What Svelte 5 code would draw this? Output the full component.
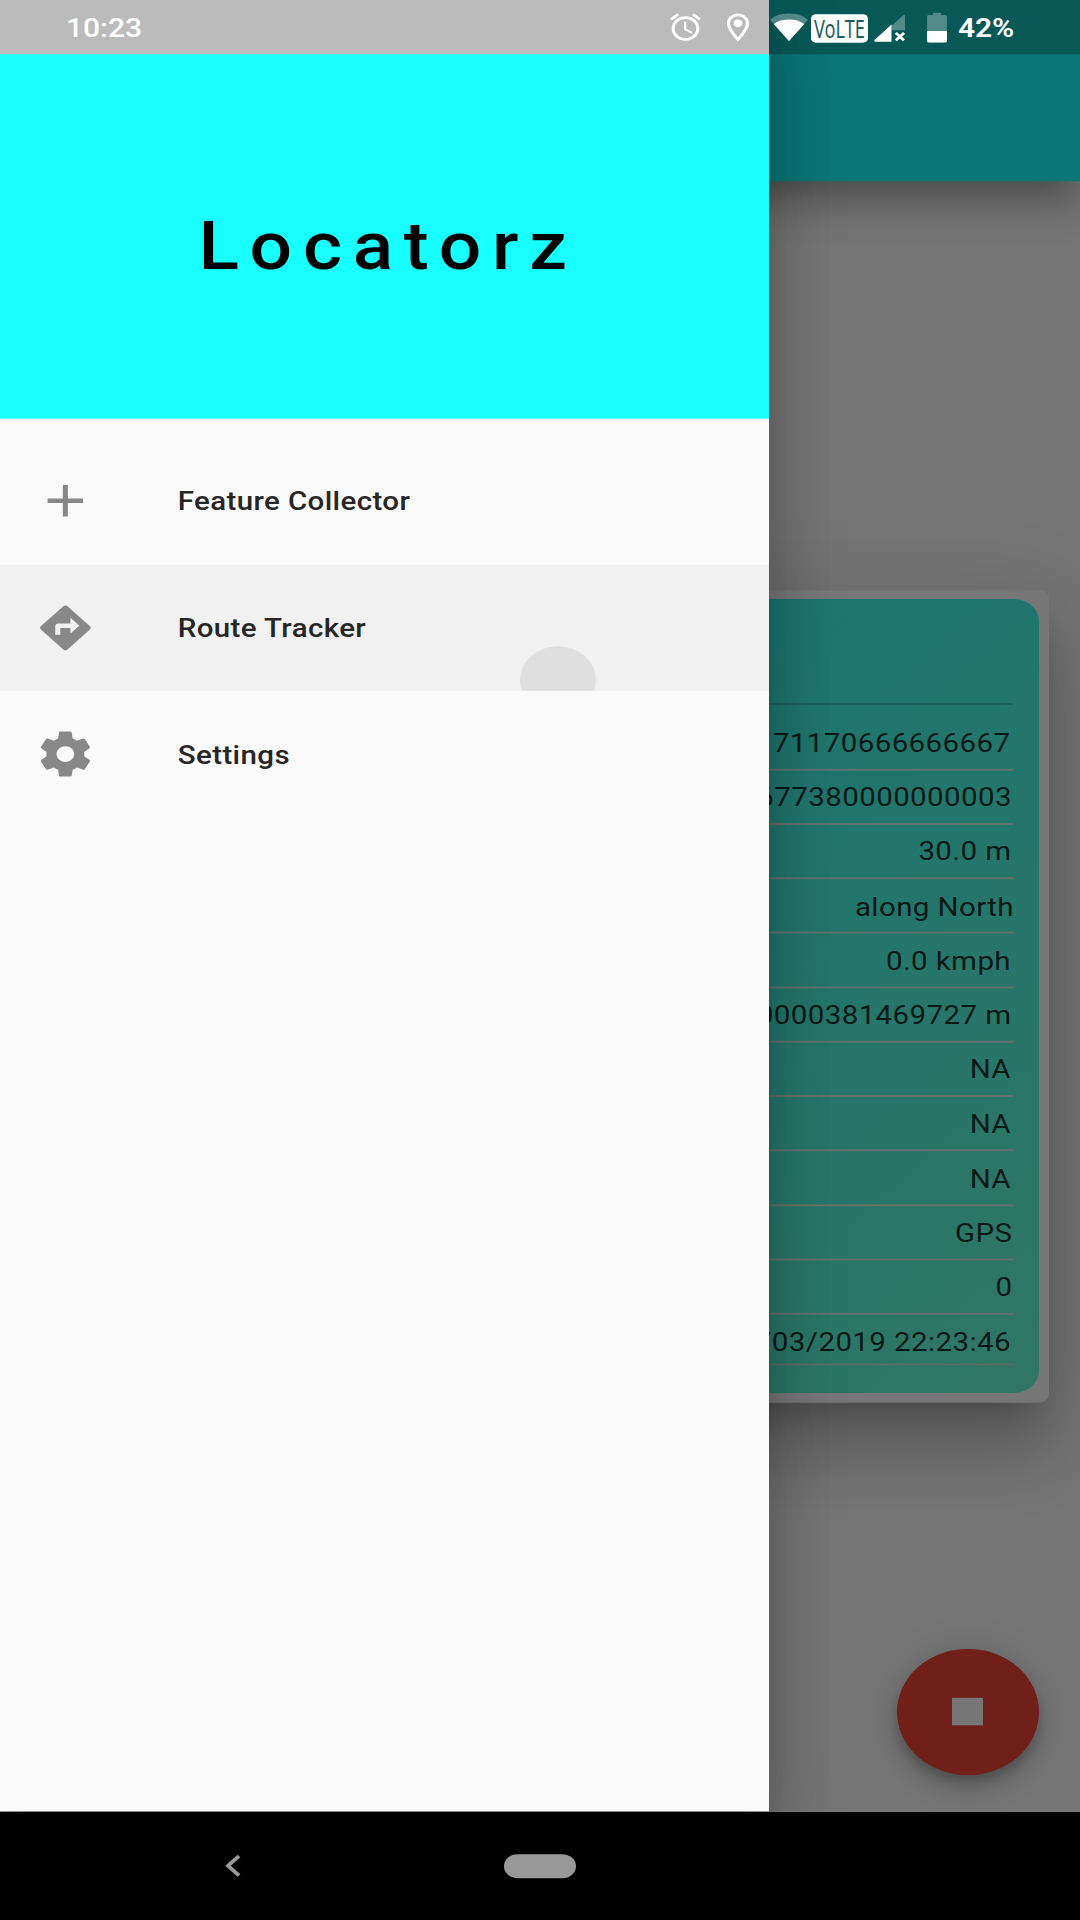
<script>
  // `inset` is the gap between a value and the right end of its divider.
  const readings = [
    { value: '71170666666667', inset: 2.5 },
    { value: '677380000000003', inset: 1 },
    { value: '30.0 m', inset: 1.5 },
    { value: 'along North', inset: -1 },
    { value: '0.0 kmph', inset: 2 },
    { value: '0000381469727 m', inset: 1.5 },
    { value: 'NA', inset: 2 },
    { value: 'NA', inset: 2 },
    { value: 'NA', inset: 2 },
    { value: 'GPS', inset: 0.5 },
    { value: '0', inset: 0.5 },
    { value: '/03/2019 22:23:46', inset: 2 }
  ];

  const menu = [
    { label: 'Feature Collector', icon: 'M19 13h-6v6h-2v-6H5v-2h6V5h2v6h6v2z' },
    {
      label: 'Route Tracker',
      active: true,
      icon: 'M21.71 11.29l-9-9c-.39-.39-1.02-.39-1.41 0l-9 9c-.39.39-.39 1.02 0 1.41l9 9c.39.39 1.02.39 1.41 0l9-9c.39-.38.39-1.01 0-1.41zM14 14.5V12h-4v3H8v-4c0-.55.45-1 1-1h5V7.5l3.5 3.5-3.5 3.5z'
    },
    {
      label: 'Settings',
      icon: 'M19.43 12.98c.04-.32.07-.64.07-.98s-.03-.66-.07-.98l2.11-1.65c.19-.15.24-.42.12-.64l-2-3.46c-.12-.22-.39-.3-.61-.22l-2.49 1c-.52-.4-1.08-.73-1.69-.98l-.38-2.65C14.46 2.18 14.25 2 14 2h-4c-.25 0-.46.18-.49.42l-.38 2.65c-.61.25-1.17.59-1.69.98l-2.49-1c-.23-.09-.49 0-.61.22l-2 3.46c-.13.22-.07.49.12.64l2.11 1.65c-.04.32-.07.65-.07.98s.03.66.07.98l-2.11 1.65c-.19.15-.24.42-.12.64l2 3.46c.12.22.39.3.61.22l2.49-1c.52.4 1.08.73 1.69.98l.38 2.65c.03.24.24.42.49.42h4c.25 0 .46-.18.49-.42l.38-2.65c.61-.25 1.17-.59 1.69-.98l2.49 1c.23.09.49 0 .61-.22l2-3.46c.12-.22.07-.49-.12-.64l-2.11-1.65zM12 15.5c-1.93 0-3.5-1.57-3.5-3.5s1.57-3.5 3.5-3.5 3.5 1.57 3.5 3.5-1.57 3.5-3.5 3.5z'
    }
  ];
</script>

<div class="viewport">
  <div class="screen">
    <div class="app">
      <main class="page">
        <header class="appbar"></header>
        <section class="card">
          <div class="panel">
            <div class="panel-head"></div>
            <ul class="readings">
              {#each readings as r}
                <li><span style:margin-right="{r.inset}px">{r.value}</span></li>
              {/each}
            </ul>
          </div>
        </section>
        <button class="fab" aria-label="Stop"><i></i></button>
      </main>

      <div class="scrim"></div>

      <aside class="drawer">
        <div class="drawer-head"><h1>Locatorz</h1></div>
        <nav>
          {#each menu as item}
            <a class:active={item.active}>
              <svg viewBox="0 0 24 24"><path d={item.icon} /></svg>
              <span>{item.label}</span>
              {#if item.active}<b class="ripple"></b>{/if}
            </a>
          {/each}
        </nav>
      </aside>

      <div class="status">
        <span class="time">10:23</span>
        <svg class="alarm" viewBox="0 0 24 24">
          <path d="M22 5.72l-4.6-3.86-1.29 1.53 4.6 3.86L22 5.72zM7.88 3.39L6.6 1.86 2 5.71l1.29 1.53 4.59-3.85zM12.5 8H11v6l4.75 2.85.75-1.23-4-2.37V8zM12 4c-4.97 0-9 4.03-9 9s4.02 9 9 9c4.97 0 9-4.03 9-9s-4.03-9-9-9zm0 16c-3.87 0-7-3.13-7-7s3.13-7 7-7 7 3.13 7 7-3.13 7-7 7z" />
        </svg>
        <svg class="pin" viewBox="0 0 24 24">
          <path d="M12 2C8.13 2 5 5.13 5 9c0 5.25 7 13 7 13s7-7.75 7-13c0-3.87-3.13-7-7-7zM7 9c0-2.76 2.24-5 5-5s5 2.24 5 5c0 2.88-2.88 7.19-5 9.88C9.92 16.21 7 11.85 7 9z" />
          <circle cx="12" cy="9" r="2.7" />
        </svg>
        <svg class="wifi" viewBox="0 0 38 31">
          <path opacity=".3" d="M19 31 0 7.200Q8 0 19 0T38 7.200Z" />
          <path d="M19 31 3.700 12Q10 7 19 7T34.300 12Z" />
        </svg>
        <svg class="volte" viewBox="0 0 57 32">
          <rect width="57" height="32" rx="5" />
          <text x="3" y="26.500" textLength="51" lengthAdjust="spacingAndGlyphs">VoLTE</text>
        </svg>
        <svg class="signal" viewBox="0 0 31 32">
          <path opacity=".3" d="M17.500 13.200 29.500 .8Q31 0 31 1.500V18H17.500Z" />
          <path d="M17.500 11.500V31H1.500Q-.5 31 .8 28.800Z" />
          <path class="cross" d="M21.800 21 30 29.500M30 21 21.800 29.500" />
        </svg>
        <svg class="battery" viewBox="0 0 20 34">
          <path opacity=".3" d="M0 5Q0 3 2 3H6V0H14V3H18Q20 3 20 5V21H0Z" />
          <path d="M0 21H20V32Q20 34 18 34H2Q0 34 0 32Z" />
        </svg>
        <span class="level">42%</span>
      </div>
    </div>

    <footer class="navbar">
      <svg class="back" viewBox="0 0 16 26"><path d="M14 2 3 13 14 24" /></svg>
      <span class="home"></span>
    </footer>
  </div>
</div>

<style>
  .viewport {
    width: 1080px;
    height: 1920px;
    overflow: hidden;
    background: #000;
  }
  /* The phone screen is 1080x2160, compressed vertically to fit the viewport. */
  .screen {
    display: flex;
    flex-direction: column;
    width: 1080px;
    height: 2160px;
    transform: scaleY(0.888889);
    transform-origin: 0 0;
    font-family: Roboto, sans-serif;
    color: #262626;
  }
  .app {
    position: relative;
    flex: 1;
    overflow: hidden;
    background: #fcfcfc;
  }
  .page {
    display: flex;
    flex-direction: column;
    height: 100%;
  }
  .appbar {
    height: 204px;
    background: #18ffff;
    box-shadow: 0 22px 28px -14px rgba(0, 0, 0, 0.2), 0 32px 36px 2px rgba(0, 0, 0, 0.12),
      0 12px 50px 6px rgba(0, 0, 0, 0.1);
  }
  .card {
    box-sizing: border-box;
    height: 914px;
    margin: 460px 31px 0;
    padding: 10px;
    border-radius: 10px;
    background: #fff;
    box-shadow: 0 28px 32px -16px rgba(0, 0, 0, 0.2), 0 58px 70px 6px rgba(0, 0, 0, 0.14),
      0 20px 90px 15px rgba(0, 0, 0, 0.12);
  }
  .panel {
    box-sizing: border-box;
    height: 893px;
    padding: 0 26px;
    border-radius: 25px;
    background: linear-gradient(135deg, #20ffff, #69ffd8);
  }
  .panel-head {
    box-sizing: border-box;
    height: 119px;
    border-bottom: 2px solid rgba(0, 0, 0, 0.14);
  }
  .readings {
    margin: 0;
    padding: 12.400px 0 0;
    list-style: none;
  }
  li {
    box-sizing: border-box;
    display: flex;
    justify-content: flex-end;
    height: 61.250px;
    padding-top: 13.500px;
    border-bottom: 2px solid #e3efea;
    font-size: 29.500px;
    line-height: 35px;
    letter-spacing: 0.4px;
    white-space: nowrap;
    color: rgba(0, 0, 0, 0.8);
  }
  li:last-child {
    height: 56.500px;
    border-color: #c8e8da;
  }
  .fab {
    position: absolute;
    right: 41.500px;
    bottom: 41.500px;
    display: grid;
    place-items: center;
    width: 142px;
    height: 142px;
    padding: 0;
    border: 0;
    border-radius: 50%;
    background: #f44336;
    box-shadow: 0 8px 12px -2px rgba(0, 0, 0, 0.2), 0 15px 25px 0 rgba(0, 0, 0, 0.14),
      0 3px 45px 0 rgba(0, 0, 0, 0.12);
  }
  .fab i {
    width: 31.500px;
    height: 31.500px;
    background: #fff;
  }
  .scrim {
    position: absolute;
    inset: 0;
    background: rgba(0, 0, 0, 0.536);
  }
  .drawer {
    position: absolute;
    top: 0;
    bottom: 0;
    left: 0;
    box-sizing: border-box;
    width: 769px;
    padding-top: 61px;
    background: #fafafa;
    box-shadow: 0 20px 25px -12px rgba(0, 0, 0, 0.2), 0 40px 60px 5px rgba(0, 0, 0, 0.14),
      0 15px 75px 12px rgba(0, 0, 0, 0.12);
  }
  .drawer-head {
    display: flex;
    justify-content: center;
    height: 410px;
    background: #18ffff;
  }
  h1 {
    margin: 172px 0 0 7px;
    font-size: 75px;
    line-height: 88px;
    font-weight: 500;
    letter-spacing: 10.700px;
    color: #000;
  }
  nav {
    padding-top: 21px;
  }
  nav a {
    position: relative;
    display: flex;
    align-items: center;
    gap: 82px;
    box-sizing: border-box;
    height: 142.600px;
    padding-left: 35px;
    overflow: hidden;
    font-size: 29.500px;
    font-weight: 500;
    letter-spacing: 0.38px;
  }
  nav span {
    padding-top: 2px;
  }
  nav a.active {
    background: #f1f1f1;
  }
  nav svg {
    width: 60.750px;
    height: 60.750px;
    fill: #888;
  }
  .ripple {
    position: absolute;
    left: 519.500px;
    top: 92.500px;
    width: 76px;
    height: 76px;
    border-radius: 50%;
    background: #dfdfdf;
  }
  .status {
    position: absolute;
    inset: 0 0 auto;
    display: flex;
    align-items: flex-start;
    height: 61px;
    background: rgba(0, 0, 0, 0.25);
    color: #fff;
    fill: #fff;
    font-size: 30px;
    line-height: 35px;
    font-weight: 500;
  }
  .time {
    width: 600px;
    margin: 14px 0 0 66px;
  }
  .alarm {
    width: 37px;
    height: 37px;
    margin: 11.500px 0 0 1px;
  }
  .pin {
    width: 38px;
    height: 38px;
    margin: 11.500px 0 0 14.500px;
  }
  .wifi {
    width: 38px;
    height: 31px;
    margin: 14.500px 0 0 13px;
  }
  .volte {
    width: 57px;
    height: 32px;
    margin: 16px 0 0 3px;
    overflow: visible;
  }
  .volte text {
    font: 28px 'Noto Sans', sans-serif;
    fill: #1f5f5f;
  }
  .signal {
    width: 31px;
    height: 32px;
    margin: 15.500px 0 0 6.500px;
  }
  .cross {
    fill: none;
    stroke: #fff;
    stroke-width: 3;
  }
  .battery {
    width: 20px;
    height: 34px;
    margin: 14px 0 0 21.500px;
  }
  .level {
    margin: 14px 0 0 11.500px;
    font-weight: 600;
    letter-spacing: -0.2px;
  }
  .navbar {
    display: flex;
    align-items: center;
    height: 122px;
    background: #000;
  }
  .back {
    width: 16px;
    height: 26px;
    margin-left: 225px;
    fill: none;
    stroke: #999;
    stroke-width: 4;
  }
  .home {
    width: 72px;
    height: 27px;
    margin-left: 263px;
    border-radius: 14px;
    background: #999;
  }
</style>
